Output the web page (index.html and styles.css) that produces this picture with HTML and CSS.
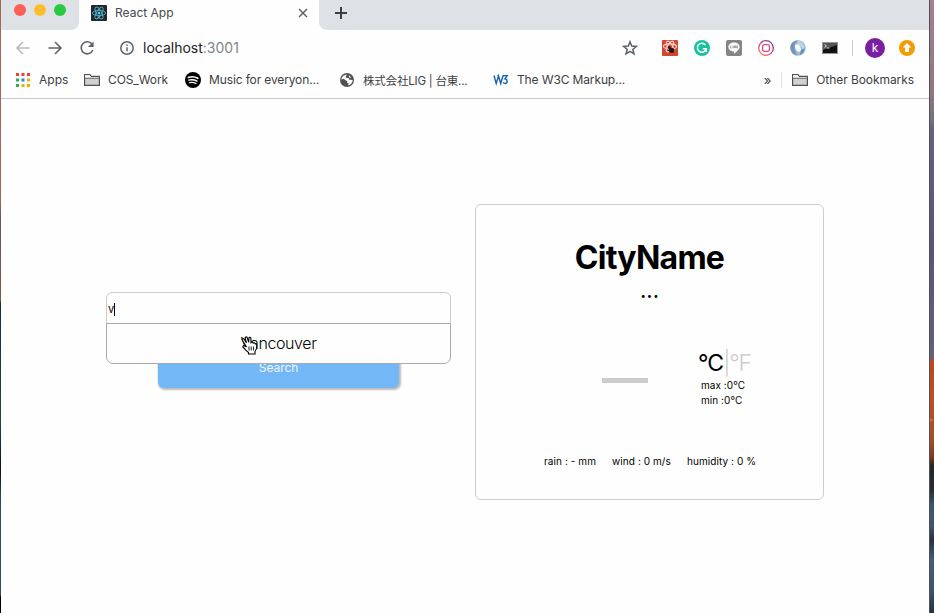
FILE: index.html
```html
<!DOCTYPE html>
<html lang="en">
<head>
<meta charset="utf-8">
<title>React App</title>
<link rel="stylesheet" href="styles.css">
</head>
<body>
<div class="desktop">
<div class="wallpaper-left"></div>
<div class="window">
  <header class="tabstrip">
    <div class="lights"><i class="light red"></i><i class="light yellow"></i><i class="light green"></i></div>
    <div class="tab">
      <svg class="i16" viewBox="0 0 16 16"><rect width="16" height="16" rx="1" fill="#222629"/><g fill="none" stroke="#4faecb" stroke-width=".9"><ellipse cx="8" cy="8" rx="6.6" ry="2.6"/><ellipse cx="8" cy="8" rx="6.6" ry="2.6" transform="rotate(60 8 8)"/><ellipse cx="8" cy="8" rx="6.6" ry="2.6" transform="rotate(120 8 8)"/></g><circle cx="8" cy="8" r="1.3" fill="#61dafb"/></svg>
      <span class="tab-title">React App</span>
      <svg class="close" viewBox="0 0 10 10"><path d="M1 1l8 8M9 1l-8 8" stroke="#5f6368" stroke-width="1.5"/></svg>
    </div>
    <div class="newtab"><svg width="12" height="12" viewBox="0 0 12 12"><path d="M6 0v12M0 6h12" stroke="#3c4043" stroke-width="2"/></svg></div>
  </header>
  <div class="toolbar">
    <svg class="i16 back" viewBox="0 0 16 16"><path d="M14.5 8H2.5M8 2L2 8l6 6" fill="none" stroke="#b9bbbe" stroke-width="1.6"/></svg>
    <svg class="i16 forward" viewBox="0 0 16 16"><path d="M1.5 8h12M8 2l6 6-6 6" fill="none" stroke="#5f6368" stroke-width="1.6"/></svg>
    <svg class="i16 reload" viewBox="0 0 16 16"><path d="M13 4.2A6 6 0 1 0 13.8 10" fill="none" stroke="#5f6368" stroke-width="1.6"/><path d="M14.6 1.500v5.500H9z" fill="#5f6368"/></svg>
    <svg class="i16 info" viewBox="0 0 16 16"><circle cx="8" cy="8" r="6.2" fill="none" stroke="#5f6368" stroke-width="1.5"/><path d="M8 7.2v4M8 4.4v1.5" stroke="#5f6368" stroke-width="1.5"/></svg>
    <span class="url">localhost<span class="port">:3001</span></span>
    <svg class="i16 star" viewBox="0 0 16 16"><path d="M8 1.8l1.7 4.3 4.7.3-3.6 3 1.2 4.5L8 11.4l-4 2.5 1.2-4.5-3.6-3 4.7-.3z" fill="none" stroke="#5a6068" stroke-width="1.5"/></svg>
    <div class="extensions">
      <svg class="i16" viewBox="0 0 16 16"><rect width="16" height="16" rx="1" fill="#d3452f"/><g fill="none" stroke="#f7d5cd" stroke-width="1.100"><ellipse cx="8" cy="6.500" rx="6.500" ry="2.600"/><ellipse cx="8" cy="6.500" rx="6" ry="2.400" transform="rotate(60 8 6.500)"/><ellipse cx="8" cy="6.500" rx="6" ry="2.400" transform="rotate(120 8 6.500)"/></g><ellipse cx="9.500" cy="10.300" rx="2.800" ry="2.500" fill="#2b1714" transform="rotate(35 9.500 10.300)"/><circle cx="7.200" cy="7.700" r="1.400" fill="#2b1714"/><path d="M5.500 10l6 2.500M11.500 8l-4 5" stroke="#2b1714" stroke-width=".8"/></svg>
      <svg class="i16" viewBox="0 0 16 16"><circle cx="8" cy="8" r="8" fill="#15c39a"/><path d="M11.500 5A4.500 4.500 0 1 0 12.300 8.700H8.800M12.300 8.500V12" fill="none" stroke="#fff" stroke-width="1.500"/></svg>
      <svg class="i16" viewBox="0 0 16 16"><rect width="16" height="16" rx="2" fill="#858585"/><path d="M8 2.500c3.200 0 5.600 2 5.600 4.500 0 2.200-2.400 4.500-5.600 6.800v-2.300C4.800 11.400 2.400 9.500 2.400 7S4.800 2.500 8 2.500z" fill="#fff"/><path d="M4.500 5.500v2.600h1.200M6.900 5.500v2.600M8 8.100V5.600l1.500 2.400V5.500M12 5.800h-1.300v2.200H12M10.700 7H12" fill="none" stroke="#858585" stroke-width=".7"/></svg>
      <svg class="i16" viewBox="0 0 16 16"><defs><linearGradient id="insta" x1="1" y1="0" x2="0" y2="1"><stop stop-color="#5b40b8"/><stop offset=".5" stop-color="#d93675"/><stop offset="1" stop-color="#f08a4c"/></linearGradient></defs><circle cx="8" cy="8" r="7.300" fill="#fff" stroke="url(#insta)" stroke-width="1.300"/><rect x="4.600" y="4.600" width="6.800" height="6.800" rx="1.800" fill="none" stroke="#d94a7c" stroke-width="1.300"/></svg>
      <svg class="i16" viewBox="0 0 16 16"><circle cx="8" cy="8" r="7.800" fill="#9fb9d0"/><path d="M8 .5C4 3 3 8 7 15.500 1 14 .3 9 .5 6 1 3 4 .5 8 .5z" fill="#6f94b8"/><path d="M7 1c7 0 10 8 5 13 1-3 1-7-3-9z" fill="#c2d4e4"/><ellipse cx="8" cy="8" rx="2.600" ry="4" fill="#f6f9fb" transform="rotate(-25 8 8)"/><path d="M11 10l4-2-2 5-3 2z" fill="#5a8fc8"/></svg>
      <svg class="i16" viewBox="0 0 16 16"><rect y="2" width="16" height="12" fill="#969696"/><rect x="1" y="3" width="14" height="10" fill="#111"/><path d="M1 3h14v2L1 10z" fill="#555"/><path d="M2.500 4.500L4.500 6l-2 1.500M5 8h2.500" fill="none" stroke="#fff" stroke-width=".8"/></svg>
    </div>
    <span class="divider"></span>
    <span class="avatar">k</span>
    <svg class="i16 update" viewBox="0 0 16 16"><circle cx="8" cy="8" r="8" fill="#f59b00"/><path d="M8 3l4.300 4.600H10V12H6V7.600H3.700z" fill="#fff"/></svg>
  </div>
  <nav class="bookmarks">
    <div class="bookmark"><svg class="i16" viewBox="0 0 16 16"><path d="M1 1h3v3H1zM6.500 1h3v3h-3zM12 1h3v3h-3z" fill="#ea4335"/><path d="M1 6.500h3v3H1zM1 12h3v3H1z" fill="#34a853"/><path d="M6.500 6.500h3v3h-3z" fill="#1a88ed"/><path d="M12 6.500h3v3h-3zM6.500 12h3v3h-3zM12 12h3v3h-3z" fill="#fbab00"/></svg><span class="label apps">Apps</span></div>
    <div class="bookmark"><svg class="i16" viewBox="0 0 16 16"><path d="M.6 13.400V2.600h5.300l1.300 1.800h8.200v9z" fill="#d0d0d0" stroke="#505050" stroke-width="1.200"/><path d="M1.200 3.200h4.400l1.300 1.800h8v1H1.200z" fill="#fff"/><path d="M1 6.200h14" stroke="#606060"/></svg><span class="label cos">COS_Work</span></div>
    <div class="bookmark"><svg class="i16" viewBox="0 0 16 16"><circle cx="8" cy="8" r="8" fill="#000"/><g fill="none" stroke="#fff" stroke-linecap="round"><path d="M3.300 5.500c3-1 6.800-.7 9.500.8" stroke-width="1.600"/><path d="M3.800 8.200c2.800-.8 5.700-.4 8.200.9" stroke-width="1.300"/><path d="M4.300 10.700c2.400-.6 4.700-.3 6.800.8" stroke-width="1.100"/></g></svg><span class="label long music">Music for everyon...</span></div>
    <div class="bookmark"><svg class="i16" viewBox="0 0 16 16"><circle cx="8" cy="8" r="7" fill="#505154"/><path d="M8.200 2.700L6.500 4.600l1 1.300 2 .1 1 1.800 3.300.3c-.1 2.400-2 4.800-4.600 5.400l.5-1.900-1.600-.9.1-1.700-2.400-.9L5 6.700l-2.700.8c.1-2.600 2.700-5 5.900-4.800z" fill="#fff"/><path d="M9.800 3.200l2.800 2.600-2.600-.6z" fill="#fff"/></svg><span class="label long lig">株式会社LIG | 台東...</span></div>
    <div class="bookmark"><svg class="i16" viewBox="0 0 16 16"><path d="M1 3.500l2.200 8L5.500 4l2.200 7.500 2.400-8M4.500 3.500H6" fill="none" stroke="#1663ad" stroke-width="1.400"/><path d="M10 3.600h4.200l-2.300 3.300c2.900 0 2.900 4.500.3 4.600-1 0-1.600-.5-2-1.300" fill="none" stroke="#1663ad" stroke-width="1.400"/></svg><span class="label long w3">The W3C Markup...</span></div>
    <span class="more">»</span>
    <div class="bookmark other"><svg class="i16" viewBox="0 0 16 16"><path d="M.6 13.400V2.600h5.300l1.300 1.800h8.200v9z" fill="#d0d0d0" stroke="#505050" stroke-width="1.200"/><path d="M1.200 3.200h4.400l1.300 1.800h8v1H1.200z" fill="#fff"/><path d="M1 6.200h14" stroke="#606060"/></svg><span class="label other-label">Other Bookmarks</span></div>
  </nav>
  <main class="page">
    <section class="search">
      <div class="field"><span>v</span><i class="caret"></i></div>
      <button class="submit">Search</button>
      <div class="suggestions"><span>Vancouver</span>
        <svg class="pointer" width="17" height="19" viewBox="0 0 17 19"><path d="M5.500 11L1.300 4.200c-.6-1.400 1-2.200 1.800-1L5.500 7 4.200 2.300c-.3-1.500 1.500-1.900 2-.5l1.500 4.400.2-4c.2-1.300 1.900-1.100 2 .2l.1 4.300c1-1 2.100-.5 2.300.4 1-.6 1.900 0 2 .8 1-.3 1.500.4 1.500 1.300 0 3-.7 5-1.800 6.300V18H7.500v-1.500C5.600 15.300 4 13 2.200 11.500c-1-1.100.2-2.300 1.500-1.600z" fill="#fff" stroke="#000" stroke-width="1.100"/><path d="M8 10.500v4M10.200 10.500v4M12.400 10.500v4" stroke="#000" stroke-width=".9"/></svg>
      </div>
    </section>
    <section class="card">
      <h1>CityName</h1>
      <p class="weather">...</p>
      <div class="reading">
        <span class="dash"></span>
        <div class="temps">
          <div class="units"><span>°C</span><span class="off">|°F</span></div>
          <div class="limit">max :0°C</div>
          <div class="limit min">min :0°C</div>
        </div>
      </div>
      <div class="details"><span>rain : - mm</span><span>wind : 0 m/s</span><span>humidity : 0 %</span></div>
    </section>
  </main>
</div>
<div class="wallpaper-right"></div>
</div>
</body>
</html>
```
FILE: styles.css
```css
* { box-sizing: border-box; }
body { margin: 0; font-family: Inter, "Noto Sans CJK JP", sans-serif; color: #000; overflow: hidden; }
svg { display: block; flex: none; }
.i16 { width: 16px; height: 16px; }
.desktop { display: grid; grid-template-columns: 1px 928px 5px; width: 934px; height: 613px; }
.wallpaper-left { background: linear-gradient(#a4685b 0, #9b6a63 200px, #6c5268 220px, #88534a 300px, #1b2a40 303px, #2b3d57 420px, #0b111c 470px, #2d4a69 500px, #304a64 595px, #000 597px); }
.wallpaper-right { border-left: 1px solid #50515e; background:
  radial-gradient(circle at 1px 60px, #ba7356 1px, transparent 2px) 0 360px / 5px 83px no-repeat,
  linear-gradient(#a68093 0, #917783 90px, #757078 122px, #65617e 128px, #595578 250px, #62617b 356px, #b8491f 363px, #b95127 400px, #a14e30 440px, #793c22 457px, #252629 466px, #2b2c31 490px, #3d556f 505px, #42566d 525px, #243243 540px, #455d7c 560px, #3e546d 590px, #25313d 613px); }
.window { background: #fefefe; display: flex; flex-direction: column; min-width: 0; }

.tabstrip { height: 30px; flex: none; display: flex; background: #fefefe; }
.lights { width: 78px; display: flex; gap: 8px; padding: 4px 0 0 13px; background: #dee1e6; border-bottom-right-radius: 8px; }
.light { width: 12px; height: 12px; border-radius: 50%; }
.red { background: #fe5f57; }
.yellow { background: #febc2e; }
.green { background: #28c840; }
.tab { width: 240px; display: flex; align-items: center; padding: 0 11px 4px 12px; }
.tab-title { margin: -1px 0 0 8px; flex: 1; font-size: 12px; color: #45484d; }
.close { width: 10px; height: 10px; }
.newtab { flex: 1; background: #dee1e6; border-bottom-left-radius: 8px; padding: 7px 0 0 16px; }

.toolbar { height: 36px; flex: none; display: flex; align-items: center; padding-left: 14px; }
.forward, .reload { margin-left: 16px; }
.info { margin-left: 24px; }
.url { margin: -1px 0 0 8px; flex: 1; font-size: 14px; color: #202124; }
.port { color: #80868b; }
.star { margin-right: 24px; }
.extensions { display: flex; gap: 16px; }
.divider { width: 1px; height: 16px; margin: 0 12px 0 14px; background: #c8cacd; }
.avatar { width: 20px; height: 20px; border-radius: 50%; background: #7b1fa2; color: #fff; font-size: 12px; line-height: 20px; text-align: center; }
.update { margin: 0 14px 0 14px; }

.bookmarks { height: 33px; flex: none; display: flex; align-items: center; gap: 16px; padding: 0 15px 5px 14px; border-bottom: 1px solid #c8c8c8; font-size: 12px; color: #3c4043; }
.bookmark { display: flex; align-items: center; gap: 8px; white-space: nowrap; }
.apps { width: 29px; }
.cos { width: 61px; letter-spacing: -.1px; }
.long { width: 114px; letter-spacing: -.13px; }
.lig { font-size: 11.5px; letter-spacing: -.2px; }
.more { margin-left: auto; margin-right: -6px; font-size: 13px; }
.other { border-left: 1px solid #dedede; padding-left: 10px; }
.other-label { letter-spacing: -.07px; }

.page { flex: 1; display: flex; align-items: flex-start; padding: 105px 0 0 105px; }
.search { position: relative; width: 345px; margin: 88px 24px 0 0; display: flex; flex-direction: column; align-items: center; }
.field { width: 345px; height: 32px; border: 1px solid #ccc; border-radius: 6px 6px 0 0; display: flex; align-items: center; padding: 2px 0 0 1px; font-size: 11px; }
.caret { width: 1px; height: 13px; background: #000; }
.submit { width: 241px; height: 41px; margin-top: 23px; padding: 0; border: 0; border-radius: 6px; background: #74b7f6; color: #f1f7fd; font: 12px Inter, sans-serif; letter-spacing: -.05px; box-shadow: 1px 1px 2px 1px #bbb; }
.suggestions { position: absolute; top: 31px; left: 0; width: 345px; height: 41px; border: 1px solid #aaa; border-radius: 0 0 7px 7px; background: #fefefe; display: flex; align-items: center; justify-content: center; padding-bottom: 1px; font-size: 16px; font-weight: 300; letter-spacing: -.4px; }
.pointer { position: absolute; left: 134px; top: 12px; }

.card { width: 349px; height: 296px; border: 1px solid #ccc; border-radius: 6px; display: flex; flex-direction: column; }
h1 { margin: 33px 0 0; font-size: 32px; line-height: 40px; font-weight: 700; letter-spacing: -.75px; text-align: center; }
.weather { margin: 0 0 4px; font-size: 22px; line-height: 24px; text-align: center; }
.reading { display: flex; padding: 43px 0 0 126px; }
.dash { width: 46px; height: 5px; background: #ccc; margin-top: 29px; }
.temps { margin-left: 50px; }
.units { font-size: 23px; line-height: 28px; height: 29px; letter-spacing: -.9px; white-space: nowrap; }
.off { color: #ccc; font-weight: 300; letter-spacing: -1.2px; }
.limit { font-size: 10px; line-height: 15px; padding-left: 3px; letter-spacing: .05px; }
.details { display: flex; gap: 16px; margin: 46px 0 0 68px; font-size: 10px; line-height: 14px; letter-spacing: .08px; white-space: nowrap; }
```
